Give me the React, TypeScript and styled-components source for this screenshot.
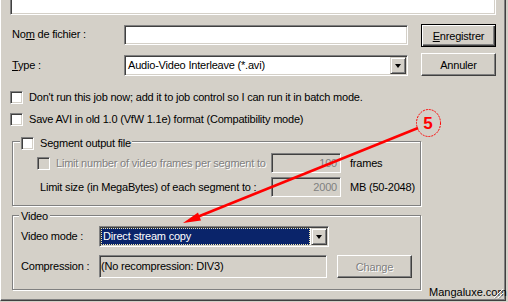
import React from "react";
import styled, { createGlobalStyle } from "styled-components";

const Global = createGlobalStyle`
  html, body { margin: 0; padding: 0; background: #d4d0c8; }
  body { font-family: "Liberation Sans", Arial, sans-serif; font-size: 11px; letter-spacing: -0.2px; color: #000; }
  #root { width: 508px; height: 302px; }
`;

const Page = styled.div`
  position: relative;
  width: 508px;
  height: 302px;
  overflow: hidden;
  background: #d4d0c8;
`;

const Frame = styled.div`
  box-sizing: border-box;
  width: 506px;
  height: 301px;
  border-left: 1px solid #fff;
  border-right: 1px solid #404040;
  border-bottom: 1px solid #404040;
  box-shadow: inset -1px -1px #808080;
  padding-left: 9px;
  display: flex;
  flex-direction: column;
  align-items: flex-start;
`;

const ListBox = styled.div`
  box-sizing: border-box;
  width: 486px;
  height: 15px;
  background: #fff;
  border-left: 1px solid #808080;
  border-right: 1px solid #fff;
  border-bottom: 1px solid #fff;
  box-shadow: inset 1px 0 #404040, inset -1px -1px #d4d0c8;
`;

const Row = styled.div<{ $mt: number; $ml?: number }>`
  display: flex;
  align-items: flex-start;
  margin-top: ${(p) => p.$mt}px;
  margin-left: ${(p) => p.$ml ?? 0}px;
`;

const Label = styled.div<{ $w: number; $h: number; $mt?: number; $ml?: number }>`
  width: ${(p) => p.$w}px;
  height: ${(p) => p.$h}px;
  line-height: ${(p) => p.$h}px;
  margin-top: ${(p) => p.$mt ?? 0}px;
  margin-left: ${(p) => p.$ml ?? 0}px;
  white-space: nowrap;
`;

const sunken = `
  box-sizing: border-box;
  border: 1px solid;
  border-color: #808080 #fff #fff #808080;
  box-shadow: inset 1px 1px #404040, inset -1px -1px #d4d0c8;
`;

const Edit = styled.div<{
  $w: number;
  $h: number;
  $mt?: number;
  $disabled?: boolean;
  $dimText?: boolean;
  $align?: string;
  $pl?: number;
}>`
  ${sunken}
  width: ${(p) => p.$w}px;
  height: ${(p) => p.$h}px;
  margin-top: ${(p) => p.$mt ?? 0}px;
  background: ${(p) => (p.$disabled ? "#d4d0c8" : "#fff")};
  color: ${(p) => (p.$dimText ? "#808080" : "#000")};
  text-align: ${(p) => p.$align ?? "left"};
  padding: 0 3px 0 ${(p) => p.$pl ?? 3}px;
  line-height: ${(p) => p.$h - 2}px;
  white-space: nowrap;
`;

const Select = styled.div<{ $w: number; $h: number; $mt?: number }>`
  ${sunken}
  display: flex;
  align-items: stretch;
  width: ${(p) => p.$w}px;
  height: ${(p) => p.$h}px;
  margin-top: ${(p) => p.$mt ?? 0}px;
  padding: 1px;
  background: #fff;
`;

const SelValue = styled.div<{ $focused?: boolean }>`
  flex: 1;
  box-sizing: border-box;
  margin-right: 1px;
  padding-left: ${(p) => (p.$focused ? 1 : 2)}px;
  line-height: ${(p) => (p.$focused ? 15 : 17)}px;
  white-space: nowrap;
  overflow: hidden;
  background: ${(p) => (p.$focused ? "#0a246a" : "#fff")};
  color: ${(p) => (p.$focused ? "#fff" : "#000")};
  border: ${(p) => (p.$focused ? "1px dotted #f0e8b0" : "none")};
`;

const DropButton = styled.div`
  box-sizing: border-box;
  width: 16px;
  height: 17px;
  background: #d4d0c8;
  border: 1px solid;
  border-color: #d4d0c8 #404040 #404040 #d4d0c8;
  box-shadow: inset 1px 1px #fff, inset -1px -1px #808080;
  display: flex;
  align-items: center;
  justify-content: center;
  &::after {
    content: "";
    width: 0;
    height: 0;
    border-left: 3.5px solid transparent;
    border-right: 3.5px solid transparent;
    border-top: 4px solid #000;
    margin-top: 1px;
  }
`;

const Button = styled.div<{ $default?: boolean; $disabled?: boolean; $ml: number }>`
  box-sizing: border-box;
  width: 75px;
  height: 23px;
  margin-left: ${(p) => p.$ml}px;
  background: #d4d0c8;
  display: flex;
  align-items: center;
  justify-content: center;
  border: 1px solid;
  border-color: ${(p) => (p.$default ? "#000" : "#fff #404040 #404040 #fff")};
  box-shadow: ${(p) =>
    p.$default
      ? "inset 1px 1px #fff, inset -1px -1px #404040, inset -2px -2px #808080"
      : "inset -1px -1px #808080"};
  color: ${(p) => (p.$disabled ? "#808080" : "#000")};
  text-shadow: ${(p) => (p.$disabled ? "1px 1px #fff" : "none")};
  white-space: nowrap;
`;

const U = styled.span`
  text-decoration: underline;
  text-underline-offset: 1px;
`;

const CheckRow = styled.div<{ $mt: number }>`
  display: flex;
  align-items: center;
  gap: 6px;
  height: 13px;
  line-height: 13px;
  margin-top: ${(p) => p.$mt}px;
  white-space: nowrap;
`;

const Box = styled.span<{ $disabled?: boolean }>`
  ${sunken}
  display: block;
  flex: none;
  width: 13px;
  height: 13px;
  background: ${(p) => (p.$disabled ? "#d4d0c8" : "#fff")};
`;

const DisabledText = styled.span`
  color: #808080;
  text-shadow: 1px 1px #fff;
`;

const Group = styled.div<{ $mt: number; $h: number }>`
  box-sizing: border-box;
  display: flex;
  flex-direction: column;
  align-items: flex-start;
  width: 409px;
  height: ${(p) => p.$h}px;
  margin-top: ${(p) => p.$mt}px;
  margin-left: 2px;
  border: 1px solid #808080;
  box-shadow: inset 1px 1px #fff, 1px 1px #fff;
`;

const GroupTitle = styled.div<{ $mt: number; $ml: number; $pad: number }>`
  display: flex;
  align-items: center;
  gap: 6px;
  height: 13px;
  line-height: 13px;
  margin-top: ${(p) => p.$mt}px;
  margin-left: ${(p) => p.$ml}px;
  padding: 0 ${(p) => p.$pad}px;
  background: #d4d0c8;
  white-space: nowrap;
`;

const SegGrid = styled.div`
  display: grid;
  grid-template-columns: 234px 70px auto;
  grid-auto-rows: 20px;
  row-gap: 4px;
  align-items: center;
  margin-top: 3px;
  margin-left: 24px;
  white-space: nowrap;
`;

const SegLabel = styled.div<{ $pl?: number }>`
  display: flex;
  align-items: center;
  gap: 6px;
  padding-left: ${(p) => p.$pl ?? 0}px;
`;

const Unit = styled.div`
  margin-left: 9px;
`;

const Watermark = styled.div`
  position: absolute;
  left: 429px;
  top: 286px;
  font-size: 11px;
  letter-spacing: 0;
  line-height: 13px;
  color: #000;
  white-space: nowrap;
`;

const Overlay = styled.svg`
  position: absolute;
  left: 0;
  top: 0;
  pointer-events: none;
`;

export default function App() {
  return (
    <>
      <Global />
      <Page>
        <Frame>
          <ListBox />
          <Row $mt={9}>
            <Label $w={112} $h={20} $ml={2}>
              No<U>m</U> de fichier :
            </Label>
            <Edit $w={284} $h={20} $mt={1} />
            <Button $ml={13} $default>
              <span>
                <U>E</U>nregistrer
              </span>
            </Button>
          </Row>
          <Row $mt={6}>
            <Label $w={112} $h={20} $mt={2} $ml={2}>
              <U>T</U>ype :
            </Label>
            <Select $w={284} $h={21} $mt={2}>
              <SelValue>Audio-Video Interleave (*.avi)</SelValue>
              <DropButton />
            </Select>
            <Button $ml={13}>Annuler</Button>
          </Row>
          <CheckRow $mt={15}>
            <Box />
            <span>Don't run this job now; add it to job control so I can run it in batch mode.</span>
          </CheckRow>
          <CheckRow $mt={9}>
            <Box />
            <span>Save AVI in old 1.0 (VfW 1.1e) format (Compatibility mode)</span>
          </CheckRow>
          <Group $mt={15} $h={65}>
            <GroupTitle $mt={-5} $ml={7} $pad={1}>
              <Box />
              <span>Segment output file</span>
            </GroupTitle>
            <SegGrid>
              <SegLabel>
                <Box $disabled />
                <DisabledText>Limit number of video frames per segment to</DisabledText>
              </SegLabel>
              <Edit $w={70} $h={20} $disabled $dimText $align="right">
                100
              </Edit>
              <Unit>frames</Unit>
              <SegLabel $pl={3}>Limit size (in MegaBytes) of each segment to :</SegLabel>
              <Edit $w={70} $h={20} $disabled $dimText $align="right">
                2000
              </Edit>
              <Unit>MB (50-2048)</Unit>
            </SegGrid>
          </Group>
          <Group $mt={9} $h={75}>
            <GroupTitle $mt={-6} $ml={6} $pad={2}>
              <span>Video</span>
            </GroupTitle>
            <Row $mt={3} $ml={8}>
              <Label $w={78} $h={21}>
                Video mode :
              </Label>
              <Select $w={230} $h={21}>
                <SelValue $focused>Direct stream copy</SelValue>
                <DropButton />
              </Select>
            </Row>
            <Row $mt={8} $ml={8}>
              <Label $w={78} $h={23}>
                Compression :
              </Label>
              <Edit $w={228} $h={23} $disabled $pl={1}>
                (No recompression: DIV3)
              </Edit>
              <Button $ml={10} $disabled>
                Change
              </Button>
            </Row>
          </Group>
        </Frame>
        <Watermark>Mangaluxe.com</Watermark>
        <Overlay width={508} height={302} viewBox="0 0 508 302">
          <g stroke="#fff" strokeWidth={1}>
            <line x1={503} y1={289} x2={494} y2={298} />
            <line x1={503} y1={293} x2={498} y2={298} />
          </g>
          <g stroke="#808080" strokeWidth={1}>
            <line x1={503.5} y1={290} x2={495} y2={298.5} />
            <line x1={503.5} y1={294} x2={499} y2={298.5} />
          </g>
          <line x1={418} y1={128} x2={196} y2={217.5} stroke="#ff0000" strokeWidth={2.5} />
          <polygon points="183,223 198,212.5 201,220.5" fill="#ff0000" />
          <ellipse
            cx={428.5}
            cy={123}
            rx={12}
            ry={13.5}
            fill="none"
            stroke="#ff0000"
            strokeWidth={1}
            strokeDasharray="2 1"
          />
          <text
            x={428}
            y={129}
            textAnchor="middle"
            fontFamily="Liberation Sans, Arial, sans-serif"
            fontWeight="bold"
            fontSize={17}
            fill="#ff0000"
          >
            5
          </text>
        </Overlay>
      </Page>
    </>
  );
}
